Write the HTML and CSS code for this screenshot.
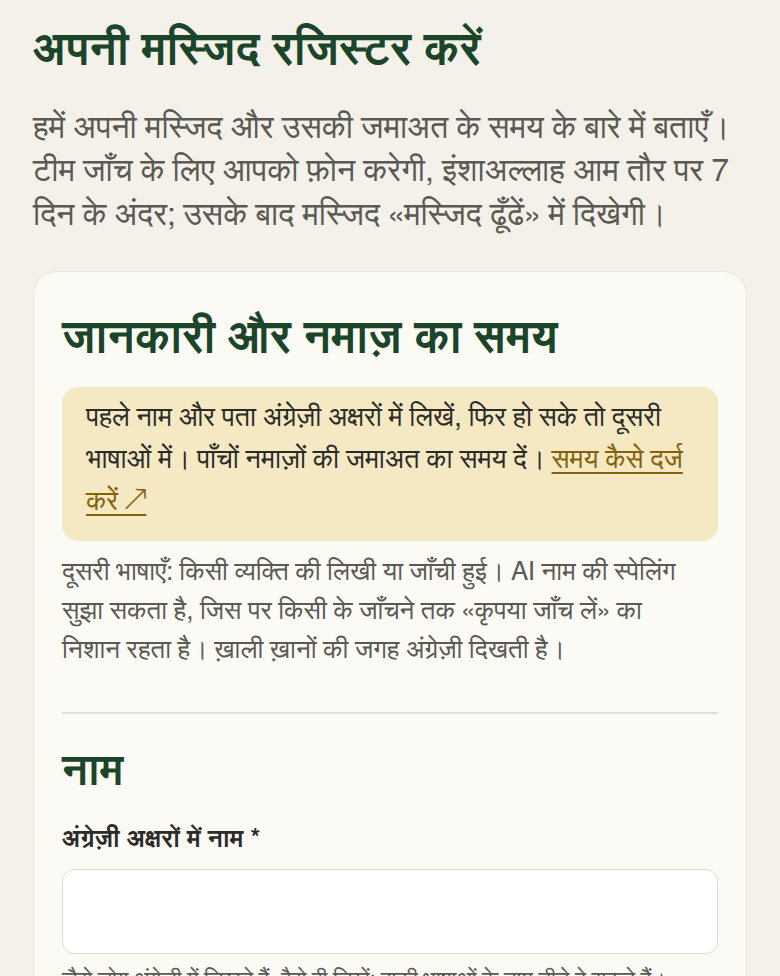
FILE: index.html
```html
<!DOCTYPE html>
<html lang="hi">
<head>
<meta charset="utf-8">
<title>अपनी मस्जिद रजिस्टर करें</title>
<link rel="stylesheet" href="styles.css">
</head>
<body>
<main class="page">
  <h1 class="title">अपनी मस्जिद रजिस्टर करें</h1>
  <p class="intro">हमें अपनी मस्जिद और उसकी जमाअत के समय के बारे में बताएँ। टीम जाँच के लिए आपको फ़ोन करेगी, इंशाअल्लाह आम तौर पर 7 दिन के अंदर; उसके बाद मस्जिद «मस्जिद ढूँढें» में दिखेगी।</p>

  <section class="card">
    <h2 class="card-title">जानकारी और नमाज़ का समय</h2>
    <div class="callout">
      पहले नाम और पता अंग्रेज़ी अक्षरों में लिखें, फिर हो सके तो दूसरी भाषाओं में। पाँचों नमाज़ों की जमाअत का समय दें। <a class="callout-link" href="#">समय कैसे दर्ज करें ↗</a>
    </div>
    <p class="note">दूसरी भाषाएँ: किसी व्यक्ति की लिखी या जाँची हुई। AI नाम की स्पेलिंग सुझा सकता है, जिस पर किसी के जाँचने तक «कृपया जाँच लें» का निशान रहता है। ख़ाली ख़ानों की जगह अंग्रेज़ी दिखती है।</p>

    <hr class="divider">

    <h3 class="section-title">नाम</h3>
    <label class="field-label" for="name-en">अंग्रेज़ी अक्षरों में नाम *</label>
    <input class="field-input" id="name-en" type="text">
    <p class="field-help">जैसे लोग अंग्रेज़ी में लिखते हैं, वैसे ही लिखें; बाकी भाषाओं के नाम नीचे दे सकते हैं।</p>
  </section>
</main>
</body>
</html>
```

FILE: styles.css
```css
* { box-sizing: border-box; }

body {
  margin: 0;
  background: #f4f1ea;
  font-family: "FreeSans", "Liberation Sans", sans-serif;
  color: #2b2b27;
}

.page {
  padding: 22px 33px 40px;
}

.title {
  margin: 0 0 26px;
  font-size: 45px;
  line-height: 1.3;
  font-weight: 700;
  color: #1b4529;
}

.intro {
  margin: 0 0 34px;
  font-size: 32px;
  line-height: 1.36;
  color: #5b5a52;
}

.card {
  background: #fcfaf4;
  border: 1.5px solid #efe7cf;
  border-radius: 24px;
  padding: 38px 28px 40px;
}

.card-title {
  margin: 0 0 18px;
  font-size: 45px;
  line-height: 1.3;
  font-weight: 700;
  color: #1b4529;
}

.callout {
  background: #f4e9c3;
  border-radius: 16px;
  padding: 10px 24px 18px;
  font-size: 27px;
  line-height: 42px;
  color: #2b2b27;
}

.callout-link {
  color: #86610a;
  text-decoration: underline;
  text-underline-offset: 4px;
  text-decoration-thickness: 2px;
}

.note {
  margin: 12px 0 0;
  padding-right: 20px;
  font-size: 26px;
  line-height: 39px;
  color: #5b5a52;
}

.divider {
  margin: 42px 0 30px;
  border: 0;
  border-top: 2px solid #dfddd5;
}

.section-title {
  margin: 0 0 22px;
  font-size: 43px;
  line-height: 1.3;
  font-weight: 700;
  color: #1b4529;
}

.field-label {
  display: block;
  margin-bottom: 10px;
  font-size: 25px;
  font-weight: 700;
  line-height: 1.5;
  color: #2b2b27;
}

.field-input {
  display: block;
  width: 100%;
  height: 85px;
  background: #ffffff;
  border: 1.5px solid #dcdbd5;
  border-radius: 12px;
  font: inherit;
}

.field-help {
  margin: 10px 0 0;
  font-size: 22px;
  line-height: 1.5;
  color: #5b5a52;
}
```
